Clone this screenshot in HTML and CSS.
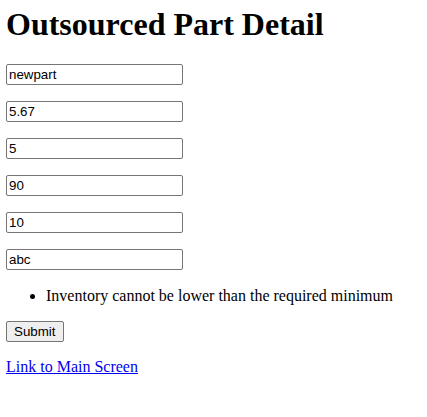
FILE: index.html
```html
<!DOCTYPE html>
<html>
<head>
<meta charset="utf-8">
<title>Outsourced Part Detail</title>
<link rel="stylesheet" href="styles.css">
</head>
<body>
<h1 class="title">Outsourced Part Detail</h1>
<form class="part-form">
  <p class="field"><input class="text-input" type="text" value="newpart"></p>
  <p class="field"><input class="text-input" type="text" value="5.67"></p>
  <p class="field"><input class="text-input" type="text" value="5"></p>
  <p class="field"><input class="text-input" type="text" value="90"></p>
  <p class="field"><input class="text-input" type="text" value="10"></p>
  <p class="field"><input class="text-input" type="text" value="abc"></p>
  <ul class="errors">
    <li>Inventory cannot be lower than the required minimum</li>
  </ul>
  <p class="field"><button class="submit-btn" type="submit">Submit</button></p>
</form>
<p class="link-row"><a class="main-link" href="#">Link to Main Screen</a></p>
</body>
</html>
```

FILE: styles.css
```css
html, body {
  background: #ffffff;
}
body {
  margin: 0 6px;
  font-family: "Liberation Serif", "Times New Roman", serif;
  font-size: 16px;
  color: #000000;
}
.title {
  font-size: 32px;
  font-weight: bold;
  line-height: 37px;
  margin: 6px 0 21px;
}
.part-form {
  margin: 0;
}
.field {
  margin: 16px 0;
  line-height: 21px;
  height: 21px;
}
.text-input {
  box-sizing: border-box;
  width: 177px;
  height: 21px;
  margin: 0;
  padding: 1px 2px;
  border: 1px solid #767676;
  border-radius: 2px;
  font-family: "Liberation Sans", Arial, sans-serif;
  font-size: 13.333px;
  color: #000000;
  background: #ffffff;
  vertical-align: top;
}
.errors {
  margin: 17px 0 16px;
  padding-left: 40px;
  line-height: 18px;
}
.submit-btn {
  box-sizing: border-box;
  height: 21px;
  margin: 0;
  padding: 1px 8px 1px 7px;
  border: 1px solid #767676;
  border-radius: 2px;
  background: #efefef;
  font-family: "Liberation Sans", Arial, sans-serif;
  font-size: 13.333px;
  color: #000000;
  vertical-align: top;
}
.link-row {
  margin: 16px 0;
  line-height: 18px;
}
.main-link {
  color: #0000ee;
  text-decoration: underline;
}
```
